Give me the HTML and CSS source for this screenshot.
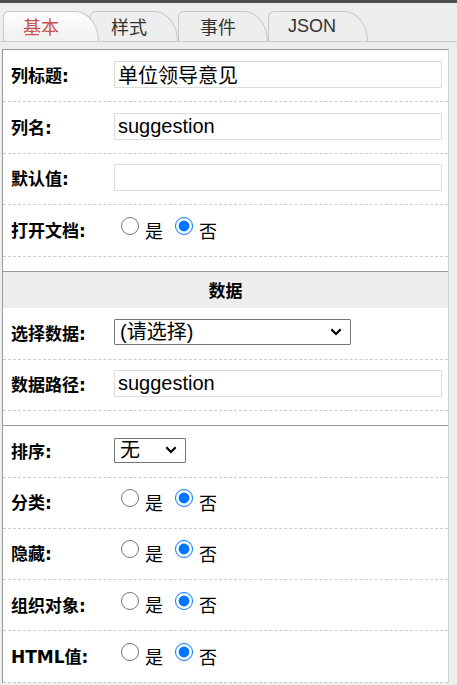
FILE: index.html
```html
<!DOCTYPE html>
<html lang="zh-CN">
<head>
<meta charset="utf-8">
<title>属性</title>
<link rel="stylesheet" href="styles.css">
</head>
<body>
<div class="topbar"></div>
<div class="tabs">
  <span class="tab active">基本</span><span class="tab">样式</span><span class="tab wide">事件</span><span class="tab json">JSON</span>
</div>
<div class="panel">
  <div class="section">
    <div class="row"><span class="label">列标题:</span><span class="value"><input class="text" type="text" value="单位领导意见"></span></div>
    <div class="row"><span class="label">列名:</span><span class="value"><input class="text" type="text" value="suggestion"></span></div>
    <div class="row"><span class="label">默认值:</span><span class="value"><input class="text" type="text" value=""></span></div>
    <div class="row"><span class="label">打开文档:</span><span class="value">
      <label class="opt"><input type="radio" name="doc">是</label>
      <label class="opt"><input type="radio" name="doc" checked>否</label>
    </span></div>
    <div class="spacer"></div>
  </div>
  <div class="head">数据</div>
  <div class="section">
    <div class="row"><span class="label">选择数据:</span><span class="value"><span class="selwrap"><select class="sel"><option>(请选择)</option></select><svg class="chev" width="12" height="8" viewBox="0 0 12 8"><path d="M1.3 1.3 L6 6 L10.7 1.3" fill="none" stroke="#000" stroke-width="2.2"/></svg></span></span></div>
    <div class="row"><span class="label">数据路径:</span><span class="value"><input class="text" type="text" value="suggestion"></span></div>
    <div class="spacer"></div>
  </div>
  <div class="section sep">
    <div class="row tight"><span class="label">排序:</span><span class="value"><span class="selwrap"><select class="sel small"><option>无</option></select><svg class="chev" width="12" height="8" viewBox="0 0 12 8"><path d="M1.3 1.3 L6 6 L10.7 1.3" fill="none" stroke="#000" stroke-width="2.2"/></svg></span></span></div>
    <div class="row tight"><span class="label">分类:</span><span class="value">
      <label class="opt"><input type="radio" name="cat">是</label>
      <label class="opt"><input type="radio" name="cat" checked>否</label>
    </span></div>
    <div class="row tight"><span class="label">隐藏:</span><span class="value">
      <label class="opt"><input type="radio" name="hide">是</label>
      <label class="opt"><input type="radio" name="hide" checked>否</label>
    </span></div>
    <div class="row tight"><span class="label">组织对象:</span><span class="value">
      <label class="opt"><input type="radio" name="org">是</label>
      <label class="opt"><input type="radio" name="org" checked>否</label>
    </span></div>
    <div class="row tight"><span class="label">HTML值:</span><span class="value">
      <label class="opt"><input type="radio" name="html">是</label>
      <label class="opt"><input type="radio" name="html" checked>否</label>
    </span></div>
  </div>
</div>
</body>
</html>
```
FILE: styles.css
```css
* { box-sizing: border-box; }
html, body { margin: 0; padding: 0; overflow: hidden; }
body {
  width: 457px;
  height: 685px;
  background: #eeeeee;
  color: #000;
  font-family: "Noto Sans CJK SC", sans-serif;
}
.topbar { height: 3px; background: #4f4f4f; }
.tabs {
  display: flex;
  align-items: flex-end;
  height: 39px;
  padding: 8px 0 0 3px;
  border-bottom: 1px solid #cccccc;
}
.tab {
  position: relative;
  height: 30px;
  border: 1px solid #c8c8c8;
  border-bottom: none;
  border-radius: 6px 24px 0 0 / 6px 30px 0 0;
  background: #eeeeee;
  font-size: 18px;
  line-height: 28px;
  color: #333;
  padding: 0 30px 0 20px;
  white-space: nowrap;
}
.tab.active {
  z-index: 2;
  margin-right: -9px;
  padding: 0 39px 0 19px;
  color: #c9524c;
  background: linear-gradient(#ffffff, #f0f0f0);
}
.tab.wide { padding: 0 31px 0 21px; }
.tab.json {
  font-family: "Liberation Sans", sans-serif;
  padding: 0 31px 0 19px;
}
.panel {
  margin: 7px 0 0 2px;
  width: 447px;
  background: #fff;
  border: 1px solid #999999;
  border-right-color: #d0d0d0;
  border-bottom: none;
}
.row {
  display: flex;
  align-items: center;
  height: 51.75px;
  padding: 0 6px 2px 8px;
  border-bottom: 1px dashed #cccccc;
}
.row.tight { height: 51.3px; }
.label {
  flex: none;
  width: 103px;
  font-family: "DejaVu Sans", "Noto Sans CJK SC", sans-serif;
  font-weight: bold;
  font-size: 17px;
  white-space: nowrap;
}
.value { flex: 1; display: flex; align-items: center; }
.text {
  width: 100%;
  height: 27px;
  margin: 0;
  padding: 0 3px;
  border: 1px solid #dddddd;
  background: #fff;
  color: #000;
  font: 20px "Liberation Sans", "Noto Sans CJK SC", sans-serif;
  outline: none;
}
.spacer { height: 14px; }
.head {
  height: 36.75px;
  border-top: 1px solid #999999;
  background: #eeeeee;
  text-align: center;
  font-weight: bold;
  font-size: 17px;
  line-height: 35px;
}
.sep { border-top: 1px solid #999999; }
.selwrap { position: relative; display: inline-flex; }
.sel {
  appearance: none;
  -webkit-appearance: none;
  width: 237px;
  height: 26px;
  margin: 0;
  padding: 0 0 0 5px;
  border: 1px solid #767676;
  border-radius: 1px;
  background: #fff;
  color: #000;
  font: 20px "Liberation Sans", "Noto Sans CJK SC", sans-serif;
}
.sel.small { width: 72px; height: 25px; }
.chev {
  position: absolute;
  right: 9px;
  top: 50%;
  margin-top: -4px;
  pointer-events: none;
}
.opt {
  display: inline-flex;
  align-items: center;
  font-size: 18px;
  margin-right: 5px;
}
.opt input {
  width: 18px;
  height: 18px;
  margin: 0 6px 7px 7px;
}
```
